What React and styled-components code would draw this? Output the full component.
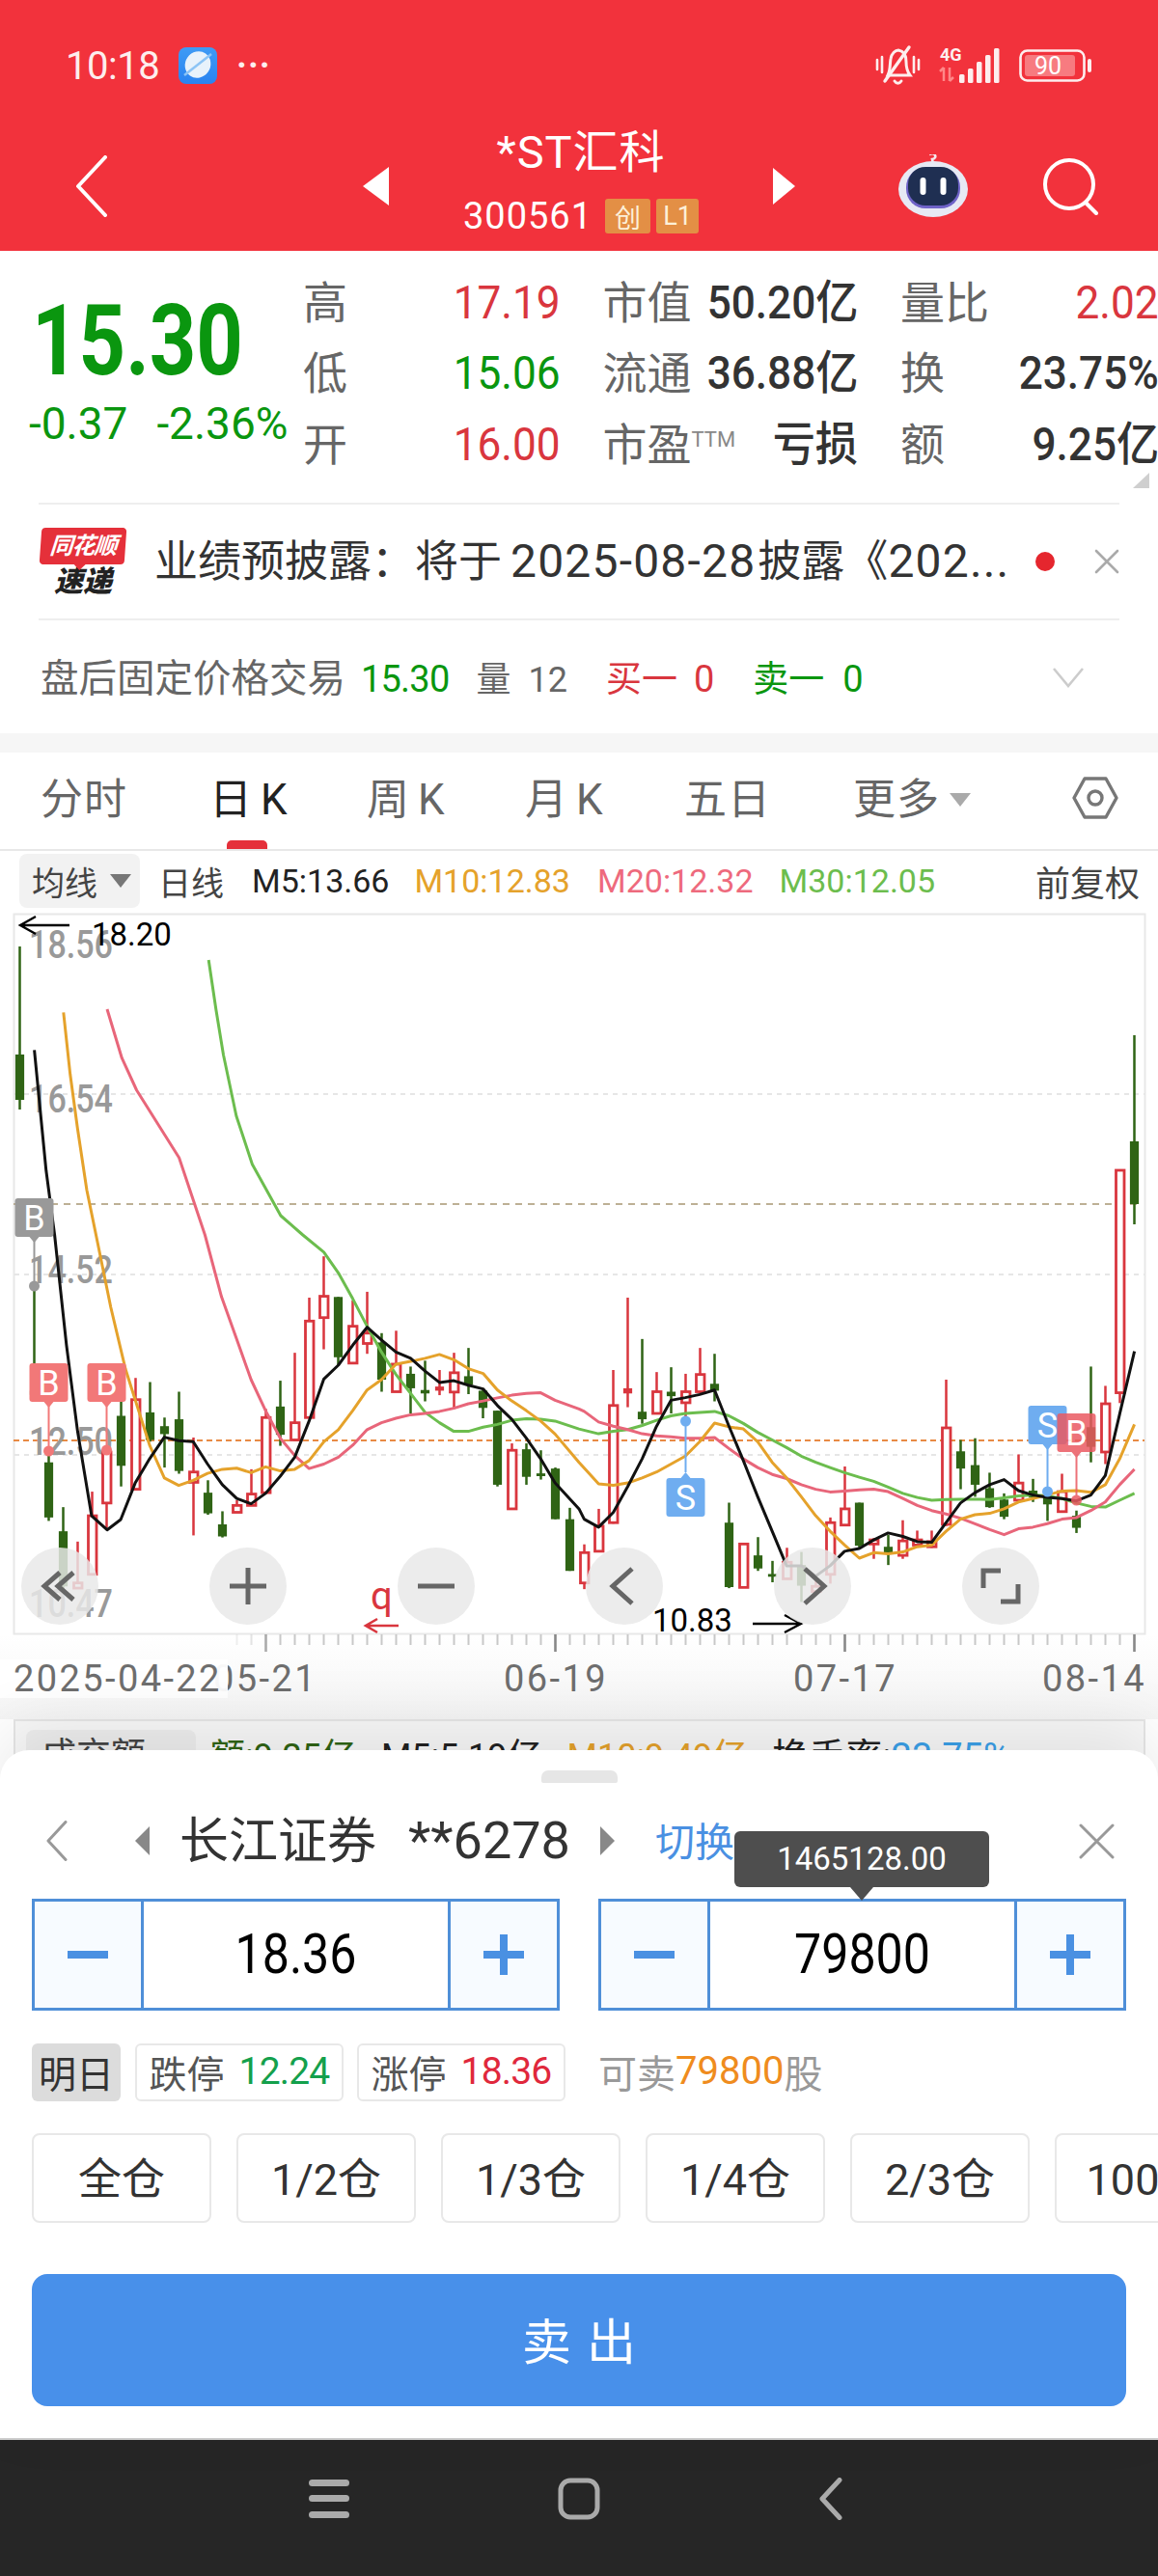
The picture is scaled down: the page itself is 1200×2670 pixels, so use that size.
import React from "react";
import styled, { createGlobalStyle } from "styled-components";

const SANS = `Roboto, "Noto Sans CJK SC", sans-serif`;

const Global = createGlobalStyle`
  html, body { margin: 0; padding: 0; background: #fff; }
  body { font-family: ${SANS}; }
  * { box-sizing: border-box; }
`;

const Page = styled.div`
  width: 1200px;
  height: 2670px;
  overflow: hidden;
  display: flex;
  flex-direction: column;
  background: #fff;
`;

/* ---------- header ---------- */
const Header = styled.header`
  height: 260px;
  flex: none;
  background: #f2323c;
  color: #fff;
  display: flex;
  flex-direction: column;
`;
const StatusBar = styled.div`
  height: 128px;
  padding: 46px 68px 0 68px;
  display: flex;
  align-items: flex-start;
  justify-content: space-between;
`;
const StatusGroup = styled.div`
  display: flex;
  align-items: center;
  gap: ${(p) => p.$gap || 20}px;
  height: 44px;
`;
const Clock = styled.span`
  font-size: 40px;
  letter-spacing: -0.5px;
  color: #fdeeee;
`;
const Dots = styled.span`
  font-size: 36px;
  line-height: 1;
  letter-spacing: 1px;
  font-weight: 700;
  color: #fdeeee;
`;
const NavRow = styled.div`
  flex: 1;
  display: grid;
  grid-template-columns: 1fr auto 1fr;
  align-items: center;
  padding: 0 60px 0 77px;
  margin-top: -2px;
`;
const NavRight = styled.div`
  display: flex;
  justify-content: flex-end;
  align-items: center;
  gap: 76px;
`;
const TitleGroup = styled.div`
  display: flex;
  align-items: center;
  margin-left: -17px;
`;
const TitleBlock = styled.div`
  width: 398px;
  display: flex;
  flex-direction: column;
  align-items: center;
`;
const Title = styled.div`
  font-size: 47px;
  line-height: 52px;
  letter-spacing: 1px;
  margin-top: -10px;
`;
const CodeLine = styled.div`
  display: flex;
  align-items: center;
  margin-top: 20px;
  gap: 6px;
  margin-left: 0;
`;
const Code = styled.span`
  font-size: 38px;
  line-height: 40px;
  letter-spacing: 1px;
  margin-right: 7px;
`;
const Badge = styled.span`
  height: 36px;
  width: ${(p) => p.$w}px;
  background: #e38f45;
  color: #fdf0d8;
  border-radius: 3px;
  font-size: 27px;
  display: flex;
  align-items: center;
  justify-content: center;
`;

/* ---------- quote ---------- */
const Quote = styled.section`
  height: 261px;
  flex: none;
  display: flex;
  position: relative;
`;
const PriceCol = styled.div`
  width: 314px;
  flex: none;
  padding: 42px 0 0 30px;
`;
const BigPrice = styled.div`
  font-size: 102px;
  line-height: 102px;
  font-weight: 700;
  color: #0a960f;
  margin-left: 3px;
  transform: scaleX(0.83);
  transform-origin: left center;
`;
const ChangeRow = styled.div`
  display: flex;
  gap: 30px;
  margin-top: 11px;
  font-size: 46px;
  line-height: 48px;
  color: #0a960f;
`;
const Stats = styled.div`
  padding-top: 17px;
  display: grid;
  grid-template-columns: 267px 265px 268px;
  grid-auto-rows: 73.5px;
  column-gap: 43.5px;
  flex: none;
`;
const StatCell = styled.div`
  display: flex;
  align-items: center;
  justify-content: space-between;
  white-space: nowrap;
`;
const StatLabel = styled.span`
  font-size: 46px;
  color: #666;
  line-height: 1;
  position: relative;
`;
const Sup = styled.sup`
  font-size: 22px;
  color: #888;
  vertical-align: 14px;
  line-height: 0;
`;
const StatValue = styled.span`
  display: inline-block;
  font-size: 48px;
  line-height: 1;
  color: ${(p) => p.$color || "#333"};
  font-weight: ${(p) => (p.$strong ? 500 : 400)};
  transform: scaleX(0.92);
  transform-origin: right center;
`;
const CornerMark = styled.i`
  position: absolute;
  right: 9px;
  bottom: 15px;
  width: 0;
  height: 0;
  border-style: solid;
  border-width: 0 0 16px 17px;
  border-color: transparent transparent #cfcfcf transparent;
`;

/* ---------- news + fixed price ---------- */
const RuledRow = styled.div`
  margin: 0 40px;
  height: ${(p) => p.$h}px;
  flex: none;
  border-top: 2px solid #eee;
  display: flex;
  align-items: center;
  position: relative;
`;
const Logo = styled.div`
  width: 88px;
  margin-left: 2px;
  display: flex;
  flex-direction: column;
  align-items: center;
  flex: none;
`;
const LogoTag = styled.div`
  width: 88px;
  height: 38px;
  background: #e5303a;
  color: #fff;
  border-radius: 4px;
  font-size: 24px;
  font-weight: 700;
  font-style: italic;
  text-align: center;
  line-height: 38px;
  letter-spacing: -1px;
  position: relative;
  transform: skewX(-4deg);
  &::after {
    content: "";
    position: absolute;
    left: 36px;
    top: 100%;
    border-style: solid;
    border-width: 6px 6px 0 6px;
    border-color: #e5303a transparent transparent transparent;
  }
`;
const LogoText = styled.div`
  font-size: 30px;
  line-height: 30px;
  font-weight: 900;
  font-style: italic;
  color: #222;
  margin-top: 3px;
`;
const NewsText = styled.div`
  font-size: 45px;
  line-height: 60px;
  color: #333;
  margin-left: 30px;
  width: 894px;
  white-space: nowrap;
  overflow: hidden;
  flex: none;
`;
const NewsNum = styled.span`
  font-size: 48px;
  letter-spacing: 1.2px;
  margin: 0 2px 0 ${(p) => p.$ml || 0}px;
`;
const RedDot = styled.i`
  width: 20px;
  height: 20px;
  border-radius: 50%;
  background: #e5262e;
  margin-left: 19px;
  flex: none;
`;
const NewsClose = styled.span`
  margin-left: 41px;
  display: flex;
`;
const FixedRow = styled.div`
  display: flex;
  align-items: baseline;
  margin-left: 2px;
  margin-top: -4px;
  white-space: nowrap;
`;
const FixedText = styled.span`
  font-size: ${(p) => p.$size || 39.5}px;
  color: ${(p) => p.$color || "#666"};
  margin-right: ${(p) => p.$mr || 0}px;
  letter-spacing: ${(p) => p.$ls || 0}px;
`;
const ChevronAt = styled.span`
  position: absolute;
  right: 36px;
  top: 50%;
  margin-top: -11px;
  display: flex;
`;
const GapBand = styled.div`
  height: 20px;
  flex: none;
  background: #f6f6f6;
`;

/* ---------- tabs ---------- */
const Tabs = styled.nav`
  height: 102px;
  flex: none;
  border-bottom: 2px solid #e8e8e8;
  position: relative;
  display: flex;
  padding: 23px 41px 0 42px;
  align-items: flex-start;
`;
const Tab = styled.div`
  width: ${(p) => p.$w}px;
  flex: none;
  font-size: 44px;
  line-height: 52px;
  color: ${(p) => (p.$active ? "#222" : "#666")};
  position: relative;
  letter-spacing: 1px;
  word-spacing: -4px;
  display: flex;
  align-items: center;
  gap: 10px;
  white-space: nowrap;
  ${(p) =>
    p.$active &&
    `&::after{content:"";position:absolute;left:18px;top:68px;width:42px;height:9px;background:#e5303a;border-radius:5px 5px 0 0;}`}
`;
const Caret = styled.i`
  width: 0;
  height: 0;
  border-style: solid;
  border-width: 14px 11px 0 11px;
  border-color: ${(p) => p.$c || "#aaa"} transparent transparent transparent;
  flex: none;
`;
const HexSlot = styled.div`
  margin-left: auto;
  display: flex;
  padding-top: 1px;
`;

/* ---------- legend ---------- */
const Legend = styled.div`
  height: 64px;
  flex: none;
  display: flex;
  align-items: center;
  padding: 0 0 2px 20px;
  white-space: nowrap;
`;
const MaPicker = styled.div`
  width: 125px;
  height: 56px;
  background: #f2f2f2;
  border-radius: 8px;
  font-size: 34px;
  color: #444;
  display: flex;
  align-items: center;
  gap: 13px;
  padding-left: 13px;
  flex: none;
`;
const LegendItem = styled.span`
  color: ${(p) => p.$c || "#222"};
  margin-left: ${(p) => p.$ml}px;
  font-size: ${(p) => p.$size || 34}px;
`;

/* ---------- chart ---------- */
const ChartWrap = styled.div`
  height: 836px;
  flex: none;
  position: relative;
`;
const ChartSvg = styled.svg`
  display: block;
  position: absolute;
  inset: 0;
`;
const ChartControls = styled.div`
  position: absolute;
  left: 22px;
  top: 658px;
  display: flex;
  gap: 115px;
`;
const RoundBtn = styled.div`
  width: 80px;
  height: 80px;
  border-radius: 50%;
  background: rgba(232, 232, 232, 0.84);
  display: flex;
  align-items: center;
  justify-content: center;
`;
const LowerStrip = styled.div`
  height: 68px;
  flex: none;
  margin: 0 13px 0 14px;
  border: 2px solid #e6e6e6;
  border-bottom: 0;
  padding: 9px 0 0 11px;
  display: flex;
  gap: 26px;
  align-items: flex-start;
  white-space: nowrap;
  font-size: 36px;
  line-height: 44px;
  background: #f8f8f8;
`;
const VolPicker = styled.div`
  width: 176px;
  height: 60px;
  border-radius: 8px;
  background: #eee;
  color: #444;
  padding: 5px 0 0 16px;
  margin-right: -11px;
  font-size: 36px;
  display: flex;
  gap: 8px;
  align-items: flex-start;
`;
const PickerCaret = styled(Caret)`
  margin-top: 20px;
`;
const LowerItem = styled.span`
  color: ${(p) => p.$c || "#222"};
  font-size: ${(p) => p.$size || 36}px;
  padding-top: 6px;
  display: inline-block;
`;
const LowerRate = styled.span`
  color: #3ba0e8;
`;

/* ---------- bottom sheet ---------- */
const Sheet = styled.section`
  margin-top: -36px;
  position: relative;
  background: #fff;
  border-radius: 30px 30px 0 0;
  box-shadow: 0 -24px 70px rgba(0, 0, 0, 0.09);
  padding: 21px 33px 33px;
  flex: none;
`;
const Handle = styled.div`
  width: 79px;
  height: 13px;
  margin: 0 auto;
  background: #e6e6e6;
  border-radius: 7px 7px 2px 2px;
`;
const AccountRow = styled.div`
  height: 120px;
  display: flex;
  align-items: center;
  position: relative;
  padding-left: 14px;
`;
const AccountPrev = styled.span`
  margin-left: 69px;
  display: flex;
`;
const AccountName = styled.span`
  font-size: 51px;
  color: #333;
  margin: 0 31px 8px 31px;
  white-space: nowrap;
  display: flex;
  align-items: baseline;
  gap: 33px;
`;
const AccountNo = styled.span`
  font-size: 54px;
`;
const SwitchLink = styled.span`
  font-size: 41px;
  color: #4a90e2;
  margin: 0 0 4px 42px;
`;
const CloseSlot = styled.span`
  position: absolute;
  right: 12px;
  top: 42px;
  display: flex;
`;
const Steppers = styled.div`
  display: flex;
  gap: 40px;
`;
const Stepper = styled.div`
  width: 547px;
  height: 116px;
  border: 3px solid #4f8fd8;
  display: flex;
  position: relative;
`;
const StepBtn = styled.div`
  width: 113px;
  flex: none;
  background: #f7fbff;
  display: flex;
  align-items: center;
  justify-content: center;
  ${(p) => (p.$right ? "border-left" : "border-right")}: 3px solid #4f8fd8;
`;
const StepValue = styled.div`
  flex: 1;
  text-align: center;
  font-size: 57px;
  line-height: 110px;
  color: #000;
  transform: scaleX(0.88);
`;
const Tip = styled.div`
  position: absolute;
  left: 138px;
  bottom: calc(100% + 15px);
  width: 264px;
  height: 58px;
  background: #4e4e4e;
  color: #fff;
  border-radius: 6px;
  font-size: 33px;
  line-height: 58px;
  text-align: center;
  &::after {
    content: "";
    position: absolute;
    left: 120px;
    top: 100%;
    border-style: solid;
    border-width: 14px 12px 0 12px;
    border-color: #4e4e4e transparent transparent transparent;
  }
`;
const LimitRow = styled.div`
  margin-top: 34px;
  height: 60px;
  display: flex;
  align-items: stretch;
  white-space: nowrap;
`;
const DayBox = styled.div`
  width: 92px;
  background: #dcdcdc;
  border-radius: 6px;
  color: #333;
  font-size: 39px;
  display: flex;
  align-items: center;
  justify-content: center;
  margin-right: 15px;
  padding-bottom: 3px;
`;
const LimitBox = styled.div`
  width: 216px;
  border: 2px solid #e8e8e8;
  border-radius: 6px;
  display: flex;
  align-items: center;
  justify-content: center;
  gap: 15px;
  font-size: 39px;
  color: #555;
  margin-right: 14px;
  padding-bottom: 3px;
`;
const LimitNum = styled.span`
  color: ${(p) => p.$c};
  letter-spacing: -0.8px;
`;
const Sellable = styled.div`
  font-size: 40px;
  color: #999;
  margin-left: 20px;
  display: flex;
  align-items: center;
  padding-bottom: 3px;
`;
const SellNum = styled.span`
  color: #ef8c1e;
`;
const PositionRow = styled.div`
  margin-top: 33px;
  margin-right: -33px;
  height: 93px;
  display: flex;
  gap: 26px;
  overflow: hidden;
`;
const PositionBtn = styled.div`
  width: 186px;
  flex: none;
  border: 2px solid #e8e8e8;
  border-radius: 8px;
  font-size: 45px;
  color: #333;
  display: flex;
  align-items: center;
  justify-content: center;
  padding-bottom: 4px;
  white-space: nowrap;
`;
const SellButton = styled.div`
  margin-top: 53px;
  height: 137px;
  background: #4890ea;
  border-radius: 16px;
  color: #fff;
  font-size: 51px;
  letter-spacing: 16px;
  text-indent: 16px;
  display: flex;
  align-items: center;
  justify-content: center;
  padding-bottom: 4px;
`;

/* ---------- system nav ---------- */
const SysNav = styled.footer`
  height: 143px;
  flex: none;
  background: #262626;
  border-top: 2px solid #cfcfcf;
  display: flex;
  align-items: center;
  gap: 216px;
  padding: 0 0 20px 320px;
`;
const SysBack = styled.span`
  margin-left: 9px;
  display: flex;
`;

/* ---------- icons ---------- */
const AppIcon = () => (
  <svg width="40" height="40" viewBox="0 0 40 40">
    <defs>
      <linearGradient id="appg" x1="0" y1="0" x2="0" y2="1">
        <stop offset="0" stopColor="#3f9bf5" />
        <stop offset="1" stopColor="#2a83f0" />
      </linearGradient>
    </defs>
    <rect x="0" y="1" width="40" height="38" rx="8" fill="url(#appg)" />
    <ellipse cx="20" cy="19" rx="13" ry="14" fill="#e8f2fb" transform="rotate(35 20 19)" />
    <path d="M6 30 L34 8" stroke="#8cc4f5" strokeWidth="2.5" />
  </svg>
);
const BellMute = () => (
  <svg width="48" height="44" viewBox="0 0 48 44" fill="none" stroke="#fdeeee" strokeWidth="3" strokeLinecap="round">
    <path d="M14 32 C17 26 16 20 17 15 C18 9 22 6 25 6 C31 7 33 12 33 18 C33 24 34 28 37 32 Z" />
    <path d="M21 38 C23 41 26 41 28 38" />
    <path d="M11 38 L36 3" strokeWidth="3.4" />
    <path d="M3 16 V26 M8 13 V29 M41 13 V29 M46 16 V26" strokeWidth="2.6" />
  </svg>
);
const Signal = () => (
  <svg width="66" height="44" viewBox="0 0 66 44">
    <text x="2" y="17" fontFamily="Roboto, sans-serif" fontWeight="700" fontSize="18" fill="#fdeeee">4G</text>
    <path d="M6 24 V38 M2 28 L6 24 M12 38 V24 M12 38 L16 34" stroke="#f88" strokeWidth="2.5" fill="none" />
    {[
      [22, 31],
      [31, 25],
      [40, 18],
      [49, 11],
      [58, 4],
    ].map(([x, y]) => (
      <rect key={x} x={x} y={y} width="5.5" height={40 - y} rx="1.5" fill="#fdeeee" />
    ))}
  </svg>
);
const Battery = () => (
  <svg width="76" height="34" viewBox="0 0 76 34">
    <rect x="1.5" y="1.5" width="66" height="31" rx="7" fill="none" stroke="#fdeeee" strokeWidth="2.6" />
    <rect x="6" y="6" width="52" height="22" rx="3" fill="#f77b80" />
    <text x="30" y="26" textAnchor="middle" fontFamily="Roboto, sans-serif" fontSize="25" fill="#fff">90</text>
    <rect x="71" y="10" width="4" height="14" rx="2" fill="#fdeeee" />
  </svg>
);
const Chevron = ({ w, h, color = "#fff", sw = 4 }) => (
  <svg width={w} height={h} viewBox={`0 0 ${w} ${h}`} fill="none" stroke={color} strokeWidth={sw} strokeLinecap="round" strokeLinejoin="round">
    <path d={`M${w - sw} ${sw / 2} L${sw} ${h / 2} L${w - sw} ${h - sw / 2}`} />
  </svg>
);
const Tri = ({ w, h, dir, color = "#fff" }) => (
  <svg width={w} height={h} viewBox={`0 0 ${w} ${h}`}>
    <polygon fill={color} points={dir === "left" ? `0,${h / 2} ${w},0 ${w},${h}` : `0,0 ${w},${h / 2} 0,${h}`} />
  </svg>
);
const Robot = () => (
  <svg width="74" height="66" viewBox="0 4 74 66">
    <path d="M33 4 C39 1 42 8 36 9 L37 14" stroke="#f6e9ee" strokeWidth="2.6" fill="none" />
    <ellipse cx="37" cy="40" rx="36" ry="29" fill="#e7e9f4" />
    <rect x="9" y="18" width="56" height="42" rx="20" fill="#6f63c8" />
    <rect x="11" y="17" width="52" height="40" rx="18" fill="#1f2f52" />
    <rect x="23.5" y="28" width="6" height="18" rx="3" fill="#fff" />
    <rect x="44.5" y="28" width="6" height="18" rx="3" fill="#fff" />
  </svg>
);
const Search = () => (
  <svg width="60" height="60" viewBox="0 0 60 60" fill="none" stroke="#fff" strokeWidth="4" strokeLinecap="round">
    <circle cx="28" cy="28" r="25" />
    <path d="M45 47 L56 58" />
  </svg>
);
const Cross = ({ s, color, sw }) => (
  <svg width={s} height={s} viewBox={`0 0 ${s} ${s}`} stroke={color} strokeWidth={sw} strokeLinecap="round">
    <path d={`M2 2 L${s - 2} ${s - 2} M${s - 2} 2 L2 ${s - 2}`} />
  </svg>
);
const Hex = () => (
  <svg width="48" height="46" viewBox="0 0 48 46" fill="none" stroke="#777" strokeWidth="3.4" strokeLinejoin="round">
    <path d="M13 3 H35 L46 23 L35 43 H13 L2 23 Z" />
    <circle cx="24" cy="23" r="7" />
  </svg>
);
const IconStroke = ({ children, s = 44, c = "#666", sw = 5 }) => (
  <svg width={s} height={s} viewBox="0 0 44 44" fill="none" stroke={c} strokeWidth={sw} strokeLinejoin="miter">
    {children}
  </svg>
);
const StepMinus = () => (
  <svg width="42" height="8">
    <rect width="42" height="8" fill="#4a90e2" />
  </svg>
);
const StepPlus = () => (
  <svg width="42" height="42" fill="#4a90e2">
    <rect y="17" width="42" height="8" />
    <rect x="17" width="8" height="42" />
  </svg>
);

/* ---------- chart data (page coordinates) ---------- */
const X = (i) => 20.5 + 15 * i;
const y5 = (v) => 1280 + v / 2.8;
const RAW = [
  ["g", 355, 535, 615, 650],
  ["g", 150, 452, 464, 464],
  ["g", 640, 660, 820, 830],
  ["g", 790, 860, 1020, 1030],
  ["r", 890, 1010, 1025, 1025],
  ["r", 745, 815, 985, 985],
  ["r", 630, 630, 778, 850],
  ["g", 465, 525, 670, 730],
  ["r", 415, 478, 738, 738],
  ["g", 427, 515, 595, 600],
  ["g", 530, 555, 578, 675],
  ["g", 455, 535, 685, 693],
  ["r", 588, 688, 718, 872],
  ["g", 712, 748, 808, 812],
  ["g", 802, 840, 875, 878],
  ["r", 770, 785, 805, 805],
  ["r", 680, 752, 785, 787],
  ["r", 505, 530, 748, 750],
  ["g", 423, 498, 580, 612],
  ["r", 342, 545, 595, 595],
  ["r", 182, 250, 530, 530],
  ["r", 62, 178, 240, 332],
  ["g", 180, 180, 355, 380],
  ["r", 190, 265, 372, 372],
  ["r", 165, 285, 315, 345],
  ["g", 285, 312, 420, 455],
  ["r", 278, 375, 455, 455],
  ["g", 382, 403, 445, 518],
  ["g", 365, 450, 460, 483],
  ["s", 392, 440, 452, 465],
  ["r", 342, 400, 456, 505],
  ["g", 328, 410, 435, 462],
  ["g", 445, 452, 502, 532],
  ["g", 510, 510, 725, 730],
  ["r", 605, 625, 795, 798],
  ["g", 605, 622, 702, 725],
  ["g", 625, 692, 700, 710],
  ["g", 675, 678, 825, 825],
  ["g", 792, 825, 975, 975],
  ["r", 898, 922, 1010, 1028],
  ["r", 795, 845, 918, 920],
  ["r", 392, 495, 835, 838],
  ["s", 182, 445, 460, 500],
  ["g", 302, 513, 535, 548],
  ["r", 398, 455, 518, 520],
  ["g", 384, 455, 468, 518],
  ["r", 403, 455, 487, 545],
  ["r", 328, 405, 455, 460],
  ["g", 345, 432, 452, 483],
  ["g", 777, 835, 1022, 1025],
  ["r", 897, 897, 1023, 1023],
  ["g", 877, 930, 968, 975],
  ["g", 946, 984, 992, 1008],
  ["r", 908, 950, 998, 1000],
  ["g", 920, 958, 1018, 1065],
  ["r", 1000, 1020, 1035, 1035],
  ["r", 820, 835, 985, 1012],
  ["r", 672, 795, 842, 845],
  ["g", 777, 777, 902, 910],
  ["r", 880, 885, 897, 940],
  ["g", 870, 905, 925, 958],
  ["r", 828, 888, 930, 940],
  ["r", 858, 885, 900, 905],
  ["r", 858, 890, 905, 908],
  ["r", 420, 560, 840, 845],
  ["g", 595, 628, 678, 738],
  ["g", 590, 668, 725, 760],
  ["g", 690, 735, 790, 792],
  ["g", 750, 768, 818, 825],
  ["r", 637, 720, 770, 772],
  ["g", 708, 742, 762, 775],
  ["g", 745, 758, 782, 830],
  ["r", 693, 745, 803, 805],
  ["g", 800, 815, 850, 865],
  ["g", 382, 558, 615, 660],
  ["r", 438, 490, 630, 665],
  ["r", 0, 0, 458, 488],
  ["g", 0, 0, 0, 0],
];
const candles = RAW.map((c, i) => {
  if (i === 0) return { t: "g", x: X(0), wt: 981, bt: 1093, bb: 1140, wb: 1150 };
  if (i === 76) return { t: "r", x: X(i), wt: 1213, bt: 1213, bb: y5(458), wb: y5(488) };
  if (i === 77) return { t: "g", x: X(i), wt: 1073, bt: 1183, bb: 1248, wb: 1269 };
  return { t: c[0], x: X(i), wt: y5(c[1]), bt: y5(c[2]), bb: y5(c[3]), wb: y5(c[4]) };
});

const z3 = (pts) => pts.map(([x, y]) => [x / 2.613, 880 + y / 3]);
const z5 = (pts) => pts.map(([x, y]) => [x / 2.613, 1280 + y / 2.8]);
const z6 = (pts) => pts.map(([x, y]) => [600 + x / 2.613, 1280 + y / 2.8]);
const path = (pts) => pts.map(([x, y]) => `${x.toFixed(1)},${y.toFixed(1)}`).join(" ");

const M5 = [
  ...z3([[93, 625], [125, 1000], [148, 1200]]),
  ...z5([[160, 120], [180, 320], [210, 570], [248, 815], [290, 856], [327, 826], [366, 720], [405, 650], [445, 587], [484, 597], [523, 600], [562, 665], [602, 725], [641, 765], [680, 780], [719, 750], [759, 700], [798, 645], [837, 540], [877, 418], [916, 378], [955, 320], [994, 268], [1033, 305], [1072, 340], [1112, 358], [1151, 395], [1190, 428], [1229, 423], [1268, 436], [1308, 447], [1347, 495], [1386, 535], [1425, 590], [1464, 650], [1503, 720]]),
  ...z6([[0, 795], [14, 825], [53, 848], [93, 805], [132, 730], [171, 650], [210, 555], [249, 480], [288, 472], [327, 463], [367, 450], [406, 555], [445, 655], [484, 760], [523, 860], [562, 960], [602, 960], [641, 990], [680, 960], [719, 918], [759, 910], [798, 885], [837, 865], [877, 875], [916, 890], [955, 892], [994, 835], [1033, 778], [1072, 748], [1112, 725], [1151, 710], [1190, 742], [1229, 755], [1268, 762], [1308, 765], [1347, 772], [1386, 755], [1425, 698], [1464, 520], [1504, 338]]),
];
const M10 = [
  ...z3([[172, 508], [190, 700], [210, 870], [235, 1060], [260, 1200]]),
  ...z5([[300, 210], [340, 390], [405, 610], [445, 705], [484, 727], [523, 712], [562, 692], [602, 680], [641, 677], [680, 690], [719, 673], [759, 685], [798, 680], [837, 655], [877, 600], [916, 565], [955, 510], [994, 450], [1033, 420], [1072, 375], [1112, 367], [1151, 358], [1190, 347], [1229, 362], [1268, 388], [1308, 402], [1347, 450], [1386, 482], [1425, 510], [1464, 540], [1503, 578]]),
  ...z6([[0, 660], [53, 722], [93, 727], [132, 720], [171, 705], [210, 688], [249, 665], [288, 642], [327, 600], [367, 546], [406, 557], [445, 563], [484, 600], [523, 660], [562, 705], [602, 760], [641, 815], [680, 860], [719, 900], [759, 938], [798, 922], [837, 925], [877, 920], [916, 905], [955, 900], [994, 860], [1033, 825], [1072, 812], [1112, 808], [1151, 795], [1190, 775], [1229, 765], [1268, 755], [1308, 743], [1347, 742], [1386, 747], [1425, 725], [1464, 650], [1504, 550]]),
];
const M20 = [
  ...z3([[290, 498], [330, 650], [370, 750], [485, 960], [555, 1200]]),
  ...z5([[600, 180], [640, 300], [680, 420], [719, 510], [759, 590], [798, 640], [837, 678], [877, 665], [916, 645], [955, 610], [994, 565], [1033, 545], [1072, 532], [1112, 522], [1151, 518], [1190, 512], [1229, 503], [1268, 490], [1308, 482], [1347, 473], [1386, 465], [1425, 460], [1464, 458], [1503, 480]]),
  ...z6([[0, 505], [14, 512], [53, 543], [93, 555], [132, 565], [171, 577], [210, 583], [249, 586], [288, 590], [327, 590], [367, 588], [406, 620], [445, 650], [484, 675], [523, 695], [562, 707], [602, 725], [641, 738], [680, 746], [719, 743], [759, 740], [798, 738], [837, 745], [877, 765], [916, 785], [955, 800], [994, 810], [1033, 822], [1072, 838], [1112, 855], [1151, 870], [1190, 853], [1229, 848], [1268, 838], [1308, 825], [1347, 820], [1386, 800], [1425, 775], [1464, 725], [1504, 680]]),
];
const M30 = [
  ...z3([[565, 345], [585, 500], [605, 640], [640, 830], [683, 980], [760, 1140], [820, 1200]]),
  ...z5([[877, 50], [916, 110], [955, 185], [994, 265], [1033, 340], [1072, 405], [1112, 460], [1151, 515], [1190, 545], [1229, 570], [1268, 570], [1308, 558], [1347, 550], [1386, 538], [1425, 533], [1464, 535], [1503, 540]]),
  ...z6([[0, 563], [53, 577], [93, 570], [132, 565], [171, 553], [210, 538], [249, 525], [288, 518], [327, 515], [367, 512], [406, 525], [445, 547], [484, 573], [523, 595], [562, 617], [602, 642], [641, 660], [680, 675], [719, 690], [759, 703], [798, 715], [837, 732], [877, 750], [916, 762], [955, 770], [994, 768], [1033, 767], [1072, 767], [1112, 768], [1151, 763], [1190, 757], [1229, 755], [1268, 757], [1308, 765], [1347, 778], [1386, 788], [1425, 790], [1464, 770], [1504, 750]]),
];

const RED = "#d9363e";
const GREEN = "#2f6415";

const Candle = ({ c }) => {
  const col = c.t === "g" ? GREEN : RED;
  return (
    <g>
      <rect x={c.x - 1.25} y={c.wt} width="2.5" height={Math.max(c.wb - c.wt, 1)} fill={col} />
      {c.t === "r" ? (
        <rect x={c.x - 4} y={c.bt} width="8.5" height={Math.max(c.bb - c.bt, 1)} fill="#fff" stroke={col} strokeWidth="2.8" />
      ) : (
        <rect x={c.x - 4.6} y={c.bt} width="9.2" height={Math.max(c.bb - c.bt, 2)} fill={col} />
      )}
    </g>
  );
};

const Flag = ({ cx, top, letter, color, pinY, below, opacity = 1 }) => {
  const bottom = top + 40;
  const tipY = below ? top - 6 : bottom + 6;
  return (
    <g opacity={opacity}>
      <line x1={cx} x2={cx} y1={below ? tipY : bottom} y2={pinY} stroke={color} strokeWidth="2" />
      <circle cx={cx} cy={pinY} r="5.5" fill={color} />
      <path
        d={
          below
            ? `M${cx - 20} ${top + 3} q0 -3 3 -3 h12 l5 -6 l5 6 h12 q3 0 3 3 v34 q0 3 -3 3 h-34 q-3 0 -3 -3 Z`
            : `M${cx - 20} ${top + 3} q0 -3 3 -3 h34 q3 0 3 3 v34 q0 3 -3 3 h-12 l-5 6 l-5 -6 h-12 q-3 0 -3 -3 Z`
        }
        fill={color}
      />
      <text x={cx} y={top + 33} textAnchor="middle" fontFamily="Roboto, sans-serif" fontSize="36" fill="#fff">
        {letter}
      </text>
    </g>
  );
};

const axisLabel = { fontFamily: "Roboto, sans-serif", fontSize: 40, fontWeight: 500, fill: "#999" };
const dateLabel = { fontFamily: "Roboto, sans-serif", fontSize: 38, fill: "#6e6e6e", letterSpacing: 2.4 };
const noteLabel = { fontFamily: "Roboto, sans-serif", fontSize: 33, fill: "#000" };

const AxisText = ({ y, children }) => (
  <text x="30" y={y} style={axisLabel} textLength="87" lengthAdjust="spacingAndGlyphs">
    {children}
  </text>
);

const Chart = () => {
  const ticks = [];
  for (let i = 15; i <= 77; i++) ticks.push(i);
  return (
    <ChartSvg width="1200" height="836" viewBox="0 946 1200 836">
      <defs>
        <linearGradient id="fadeBg" x1="0" y1="0" x2="0" y2="1">
          <stop offset="0" stopColor="#fff" />
          <stop offset="1" stopColor="#f5f5f5" />
        </linearGradient>
      </defs>
      <rect x="0" y="1694" width="1200" height="88" fill="url(#fadeBg)" />
      <rect x="14.5" y="947.5" width="1172" height="746" fill="#fff" stroke="#e8e8e8" strokeWidth="2" />
      {[1134, 1321, 1508].map((y) => (
        <line key={y} x1="15" x2="1186" y1={y} y2={y} stroke="#e6e6e6" strokeWidth="2" strokeDasharray="5 5" />
      ))}
      <line x1="14" x2="1184" y1="1248" y2="1248" stroke="#bdb095" strokeWidth="2" strokeDasharray="7 6" />
      <line x1="14" x2="1186" y1="1493" y2="1493" stroke="#e88a44" strokeWidth="2" strokeDasharray="6 4" />

      <AxisText y={993}>18.56</AxisText>
      <AxisText y={1153}>16.54</AxisText>
      <AxisText y={1330}>14.52</AxisText>
      <AxisText y={1508}>12.50</AxisText>
      <AxisText y={1676}>10.47</AxisText>

      {candles.map((c, i) => (
        <Candle key={i} c={c} />
      ))}
      <polyline points={path(M30)} fill="none" stroke="#6cbd4e" strokeWidth="3" strokeLinejoin="round" />
      <polyline points={path(M20)} fill="none" stroke="#e8667a" strokeWidth="3" strokeLinejoin="round" />
      <polyline points={path(M10)} fill="none" stroke="#e5a22b" strokeWidth="3" strokeLinejoin="round" />
      <polyline points={path(M5)} fill="none" stroke="#111" strokeWidth="3" strokeLinejoin="round" />

      <Flag cx={35.5} top={1242} letter="B" color="#999" pinY={1333} />
      <Flag cx={50.5} top={1413} letter="B" color="#f27878" pinY={1504} />
      <Flag cx={110.5} top={1413} letter="B" color="#f27878" pinY={1503} />
      <Flag cx={710.5} top={1532} letter="S" color="#6fadf0" pinY={1473} below />
      <Flag cx={1085.5} top={1457} letter="S" color="#6fadf0" pinY={1546} />
      <Flag cx={1115.5} top={1465} letter="B" color="#ea5a62" pinY={1555} opacity={0.85} />

      <path d="M72 959 H21 M37 950 L21 959 L37 968" fill="none" stroke="#000" strokeWidth="2.4" />
      <text x="95" y="980" style={noteLabel}>18.20</text>
      <text x="676" y="1691" style={noteLabel}>10.83</text>
      <path d="M780 1683 H830 M813 1674 L830 1683 L813 1692" fill="none" stroke="#000" strokeWidth="2.4" />
      <text x="384" y="1668" fontFamily="Roboto, sans-serif" fontSize="40" fill="#d9363e">q</text>
      <path d="M413 1685 H380 M391 1678 L379 1685 L391 1692" fill="none" stroke="#d9363e" strokeWidth="2.6" />

      {ticks.map((i) => {
        const major = i === 17 || i === 37 || i === 57 || i === 77;
        return (
          <line
            key={i}
            x1={X(i)}
            x2={X(i)}
            y1="1694"
            y2={major ? 1712 : 1705}
            stroke={major ? "#888" : "#c8c8c8"}
            strokeOpacity={i < 18 ? 0.3 + (i - 15) * 0.2 : 1}
            strokeWidth={major ? 2.6 : 2}
          />
        );
      })}

      <text x="275" y="1753" textAnchor="middle" style={dateLabel}>05-21</text>
      <rect x="0" y="1720" width="236" height="40" fill="#fff" fillOpacity="0.95" />
      <text x="14" y="1753" style={dateLabel}>2025-04-22</text>
      <text x="576" y="1753" textAnchor="middle" style={dateLabel}>06-19</text>
      <text x="876" y="1753" textAnchor="middle" style={dateLabel}>07-17</text>
      <text x="1188" y="1753" textAnchor="end" style={dateLabel}>08-14</text>
    </ChartSvg>
  );
};

const CONTROLS = [
  <path key="a" d="M22 8 L6 22 L22 36 M36 8 L20 22 L36 36" />,
  <path key="b" d="M3 22 H41 M22 3 V41" />,
  <path key="c" d="M3 22 H41" />,
  <path key="d" d="M30 4 L10 22 L30 40" />,
  <path key="e" d="M14 4 L34 22 L14 40" />,
  <path key="f" d="M22 6 H4 V24 M22 38 H40 V20" />,
];

const STATS = [
  ["高", "17.19", "#d9363e"],
  ["市值", "50.20亿", null, true],
  ["量比", "2.02", "#d9363e"],
  ["低", "15.06", "#0a960f"],
  ["流通", "36.88亿", null, true],
  ["换", "23.75%", "#333", true],
  ["开", "16.00", "#d9363e"],
  ["市盈", "亏损", null, true, true],
  ["额", "9.25亿", "#333", true],
];

export default function App() {
  return (
    <Page>
      <Global />
      <Header>
        <StatusBar>
          <StatusGroup>
            <Clock>10:18</Clock>
            <AppIcon />
            <Dots>···</Dots>
          </StatusGroup>
          <StatusGroup $gap={18}>
            <BellMute />
            <Signal />
            <Battery />
          </StatusGroup>
        </StatusBar>
        <NavRow>
          <Chevron w={36} h={64} />
          <TitleGroup>
            <Tri w={27} h={40} dir="left" />
            <TitleBlock>
              <Title>*ST汇科</Title>
              <CodeLine>
                <Code>300561</Code>
                <Badge $w={47}>创</Badge>
                <Badge $w={44}>L1</Badge>
              </CodeLine>
            </TitleBlock>
            <Tri w={23} h={38} dir="right" />
          </TitleGroup>
          <NavRight>
            <Robot />
            <Search />
          </NavRight>
        </NavRow>
      </Header>

      <Quote>
        <PriceCol>
          <BigPrice>15.30</BigPrice>
          <ChangeRow>
            <span>-0.37</span>
            <span>-2.36%</span>
          </ChangeRow>
        </PriceCol>
        <Stats>
          {STATS.map(([label, value, color, strong, ttm]) => (
            <StatCell key={label}>
              <StatLabel>
                {label}
                {ttm && <Sup>TTM</Sup>}
              </StatLabel>
              <StatValue $color={color} $strong={strong}>
                {value}
              </StatValue>
            </StatCell>
          ))}
        </Stats>
        <CornerMark />
      </Quote>

      <RuledRow $h={120}>
        <Logo>
          <LogoTag>同花顺</LogoTag>
          <LogoText>速递</LogoText>
        </Logo>
        <NewsText>
          业绩预披露：将于<NewsNum $ml={9}>2025-08-28</NewsNum>披露《<NewsNum>202...</NewsNum>
        </NewsText>
        <RedDot />
        <NewsClose>
          <Cross s={26} color="#aaa" sw={2.6} />
        </NewsClose>
      </RuledRow>

      <RuledRow $h={119}>
        <FixedRow>
          <FixedText $mr={16}>盘后固定价格交易</FixedText>
          <FixedText $color="#0a960f" $size={38} $mr={28} $ls={-0.8}>15.30</FixedText>
          <FixedText $size={36} $mr={18}>量</FixedText>
          <FixedText $size={36} $mr={40}>12</FixedText>
          <FixedText $color="#d9363e" $size={37} $mr={17}>买一</FixedText>
          <FixedText $color="#d9363e" $size={38} $mr={40}>0</FixedText>
          <FixedText $color="#0a960f" $size={37} $mr={19}>卖一</FixedText>
          <FixedText $color="#0a960f" $size={38}>0</FixedText>
        </FixedRow>
        <ChevronAt>
          <svg width="34" height="22" viewBox="0 0 34 22" fill="none" stroke="#ccc" strokeWidth="2.6">
            <path d="M2 2 L17 20 L32 2" />
          </svg>
        </ChevronAt>
      </RuledRow>

      <GapBand />

      <Tabs>
        <Tab $w={175}>分时</Tab>
        <Tab $w={163} $active>日 K</Tab>
        <Tab $w={164}>周 K</Tab>
        <Tab $w={165}>月 K</Tab>
        <Tab $w={175}>五日</Tab>
        <Tab $w={130}>
          更多
          <Caret />
        </Tab>
        <HexSlot>
          <Hex />
        </HexSlot>
      </Tabs>

      <Legend>
        <MaPicker>
          均线
          <Caret $c="#777" />
        </MaPicker>
        <LegendItem $c="#444" $ml={19}>日线</LegendItem>
        <LegendItem $ml={29}>M5:13.66</LegendItem>
        <LegendItem $c="#e5a22b" $ml={26}>M10:12.83</LegendItem>
        <LegendItem $c="#ee6a7d" $ml={28}>M20:12.32</LegendItem>
        <LegendItem $c="#6cbd4e" $ml={27}>M30:12.05</LegendItem>
        <LegendItem $c="#444" $ml={104} $size={36}>前复权</LegendItem>
      </Legend>

      <ChartWrap>
        <Chart />
        <ChartControls>
          {CONTROLS.map((icon, i) => (
            <RoundBtn key={i}>
              <IconStroke>{icon}</IconStroke>
            </RoundBtn>
          ))}
        </ChartControls>
      </ChartWrap>

      <LowerStrip>
        <VolPicker>
          成交额
          <PickerCaret $c="#aaa" />
        </VolPicker>
        <LowerItem $c={GREEN}>额:9.25亿</LowerItem>
        <LowerItem>M5:5.19亿</LowerItem>
        <LowerItem $c="#e5a22b">M10:9.49亿</LowerItem>
        <LowerItem $size={38}>
          换手率:<LowerRate>23.75%</LowerRate>
        </LowerItem>
      </LowerStrip>

      <Sheet>
        <Handle />
        <AccountRow>
          <Chevron w={24} h={42} color="#999" sw={3} />
          <AccountPrev>
            <Tri w={15} h={30} dir="left" color="#888" />
          </AccountPrev>
          <AccountName>
            长江证券
            <AccountNo>**6278</AccountNo>
          </AccountName>
          <Tri w={15} h={30} dir="right" color="#888" />
          <SwitchLink>切换</SwitchLink>
          <CloseSlot>
            <Cross s={37} color="#999" sw={3} />
          </CloseSlot>
        </AccountRow>
        <Steppers>
          <Stepper>
            <StepBtn>
              <StepMinus />
            </StepBtn>
            <StepValue>18.36</StepValue>
            <StepBtn $right>
              <StepPlus />
            </StepBtn>
          </Stepper>
          <Stepper>
            <Tip>1465128.00</Tip>
            <StepBtn>
              <StepMinus />
            </StepBtn>
            <StepValue>79800</StepValue>
            <StepBtn $right>
              <StepPlus />
            </StepBtn>
          </Stepper>
        </Steppers>
        <LimitRow>
          <DayBox>明日</DayBox>
          <LimitBox>
            跌停 <LimitNum $c="#14a04c">12.24</LimitNum>
          </LimitBox>
          <LimitBox>
            涨停 <LimitNum $c="#e0283c">18.36</LimitNum>
          </LimitBox>
          <Sellable>
            可卖<SellNum>79800</SellNum>股
          </Sellable>
        </LimitRow>
        <PositionRow>
          {["全仓", "1/2仓", "1/3仓", "1/4仓", "2/3仓", "100股"].map((t) => (
            <PositionBtn key={t}>{t}</PositionBtn>
          ))}
        </PositionRow>
        <SellButton>卖出</SellButton>
      </Sheet>

      <SysNav>
        <svg width="42" height="40" viewBox="0 0 42 40" fill="#aaa">
          <rect width="42" height="7" y="0" rx="3.5" />
          <rect width="42" height="7" y="16" rx="3.5" />
          <rect width="42" height="7" y="33" rx="3.5" />
        </svg>
        <svg width="44" height="44" viewBox="0 0 44 44" fill="none" stroke="#aaa" strokeWidth="5">
          <rect x="3" y="3" width="38" height="38" rx="10" />
        </svg>
        <SysBack>
          <Chevron w={28} h={44} color="#aaa" sw={5} />
        </SysBack>
      </SysNav>
    </Page>
  );
}
